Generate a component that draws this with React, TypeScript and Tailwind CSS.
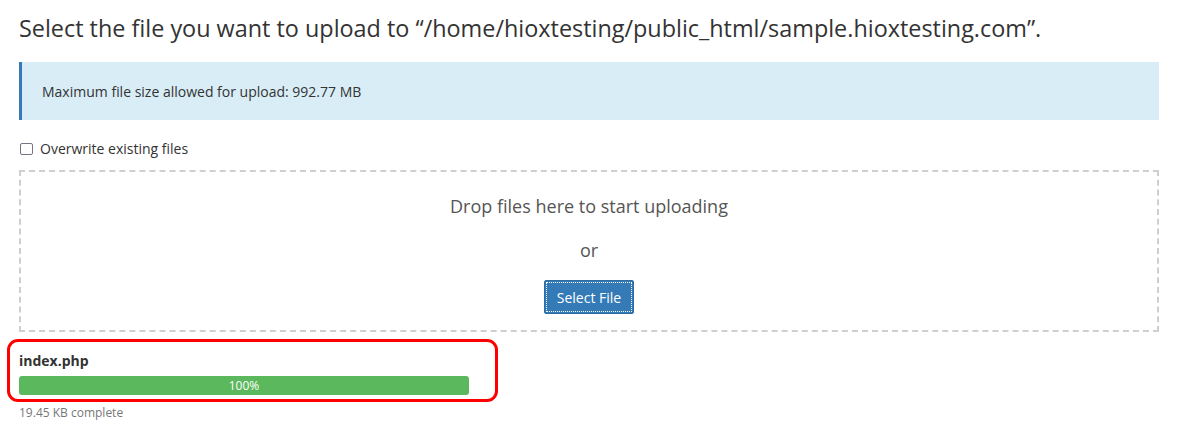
import React from "react";

export default function App() {
  return (
    <div className="w-[1178px] h-[436px] bg-white overflow-hidden" style={{ fontFamily: '"Open Sans", sans-serif' }}>
      <div className="pl-[19px] w-[1159px]">
        <h1 className="pt-[12px] text-[23.4px] leading-[32px] text-[#333] font-normal">
          Select the file you want to upload to “/home/hioxtesting/public_html/sample.hioxtesting.com”.
        </h1>
        <div className="mt-[18px] h-[58px] bg-[#d9edf7] border-l-[3px] border-[#337ab7] flex items-center pl-[20px] text-[14px] text-[#333]">
          Maximum file size allowed for upload: 992.77 MB
        </div>
        <label className="mt-[19px] flex items-center gap-[7px] text-[14px] text-[#333] leading-[20px]">
          <span className="w-[13px] h-[12px] border-[1.5px] border-[#777383] rounded-[2px] bg-white ml-[1px]" />
          Overwrite existing files
        </label>
        <div className="mt-[11px] h-[162px] border-2 border-dashed border-[#cfcfcf] flex flex-col items-center">
          <div className="mt-[22px] text-[18px] leading-[24px] text-[#555]">Drop files here to start uploading</div>
          <div className="mt-[20px] text-[18px] leading-[24px] text-[#555]">or</div>
          <button className="mt-[18px] w-[90px] h-[34px] bg-[#337ab7] border border-[#2e6da4] rounded-[2px] text-white text-[14px] outline outline-1 outline-dotted outline-white outline-offset-[-3px]">
            Select File
          </button>
        </div>
        <div className="relative mt-[19px] w-[450px]">
          <div className="text-[14px] font-bold text-[#333] leading-[20px]">index.php</div>
          <div className="mt-[5px] h-[19px] bg-[#5cb85c] rounded-[3px] flex items-center justify-center text-white text-[12px]">
            100%
          </div>
          <div className="absolute left-[-12px] top-[-12px] w-[491px] h-[63px] border-[3px] border-[#f00] rounded-[11px]" />
        </div>
        <div className="mt-[10px] text-[12px] text-[#777] leading-[16px]">19.45 KB complete</div>
      </div>
    </div>
  );
}
